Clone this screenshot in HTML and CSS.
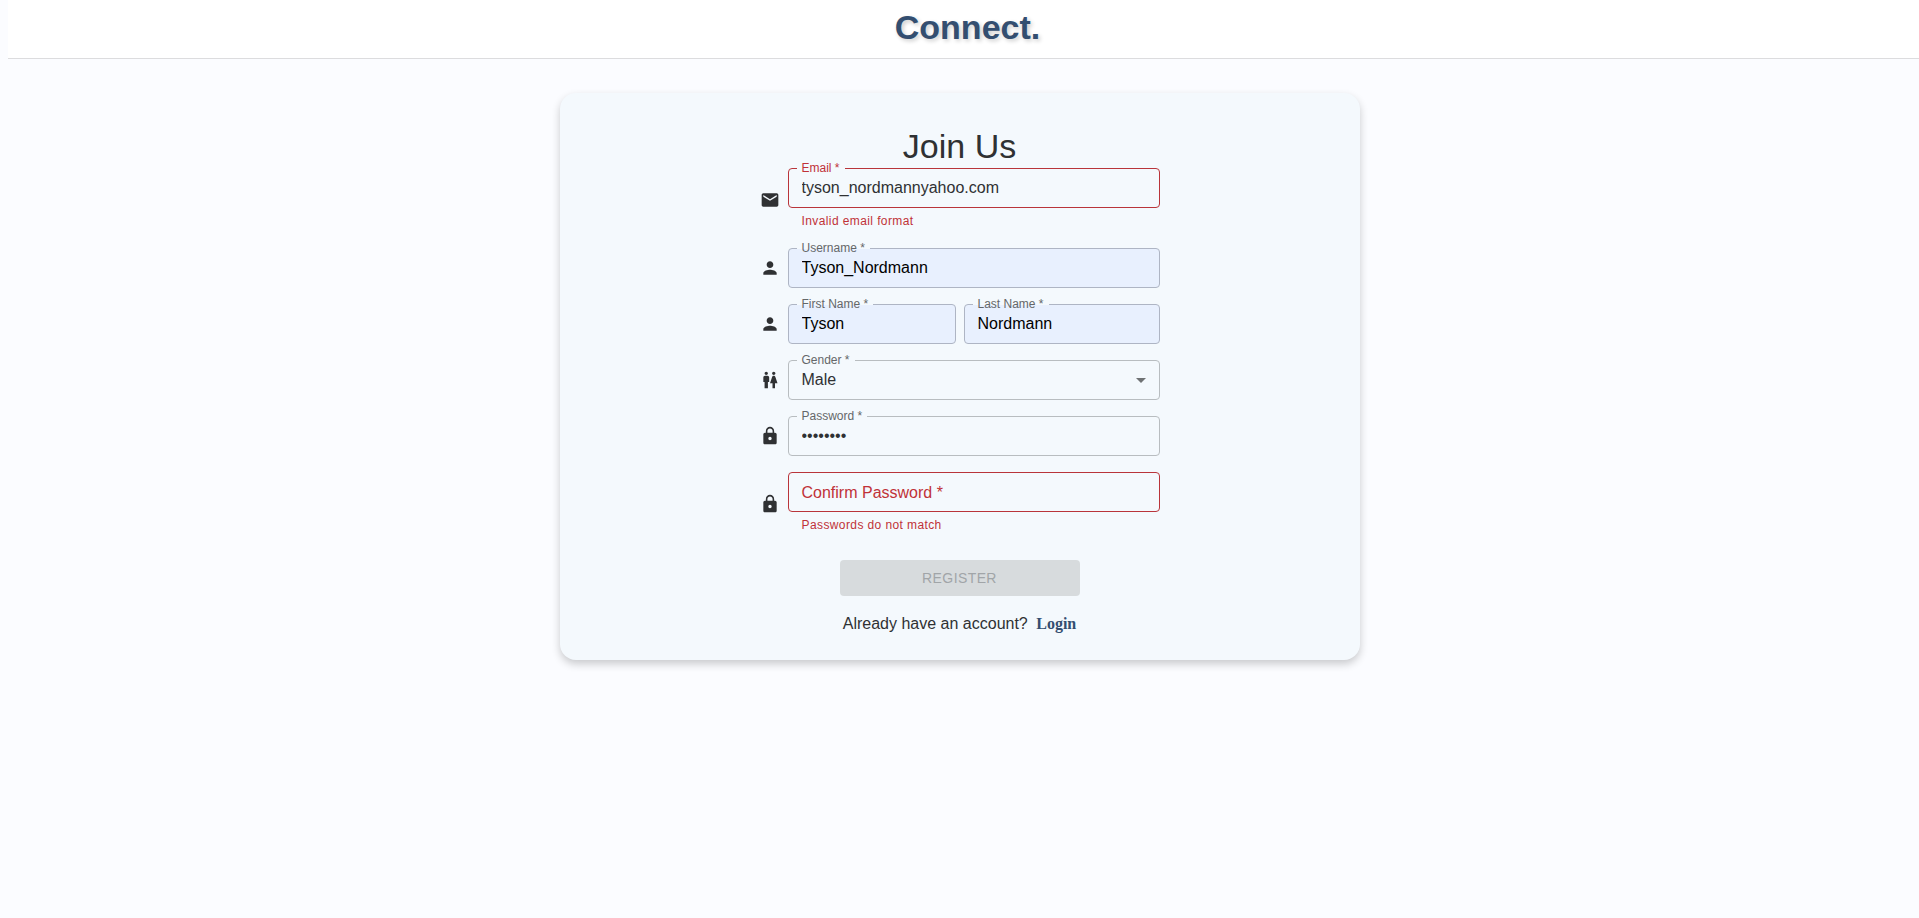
FILE: index.html
```html
<!DOCTYPE html>
<html lang="en">
<head>
<meta charset="utf-8">
<meta name="viewport" content="width=device-width, initial-scale=1">
<title>Connect. - Join Us</title>
<link rel="stylesheet" href="styles.css">
</head>
<body>
<header class="topbar"><span class="brand">Connect.</span></header>
<main class="page">
  <form class="card" novalidate>
    <h1 class="title">Join Us</h1>
    <div class="rows">
      <div class="row">
        <svg class="icon" viewBox="0 0 24 24" aria-hidden="true"><path d="M20 4H4c-1.100 0-1.990.9-1.990 2L2 18c0 1.100.9 2 2 2h16c1.100 0 2-.9 2-2V6c0-1.100-.9-2-2-2zm0 4l-8 5-8-5V6l8 5 8-5v2z"/></svg>
        <div class="field error">
          <label class="label" for="email">Email *</label>
          <input class="control" id="email" type="email" value="tyson_nordmannyahoo.com" aria-describedby="email-help">
          <p class="help" id="email-help">Invalid email format</p>
        </div>
      </div>
      <div class="row">
        <svg class="icon" viewBox="0 0 24 24" aria-hidden="true"><path d="M12 12c2.210 0 4-1.790 4-4s-1.790-4-4-4-4 1.790-4 4 1.790 4 4 4zm0 2c-2.670 0-8 1.340-8 4v2h16v-2c0-2.660-5.330-4-8-4z"/></svg>
        <div class="field filled">
          <label class="label" for="username">Username *</label>
          <input class="control" id="username" type="text" value="Tyson_Nordmann">
        </div>
      </div>
      <div class="row">
        <svg class="icon" viewBox="0 0 24 24" aria-hidden="true"><path d="M12 12c2.210 0 4-1.790 4-4s-1.790-4-4-4-4 1.790-4 4 1.790 4 4 4zm0 2c-2.670 0-8 1.340-8 4v2h16v-2c0-2.660-5.330-4-8-4z"/></svg>
        <div class="field filled first">
          <label class="label" for="first">First Name *</label>
          <input class="control" id="first" type="text" value="Tyson">
        </div>
        <div class="field filled last">
          <label class="label" for="last">Last Name *</label>
          <input class="control" id="last" type="text" value="Nordmann">
        </div>
      </div>
      <div class="row">
        <svg class="icon" viewBox="0 0 24 24" aria-hidden="true"><path d="M5.500 22v-7.500H4V9c0-1.100.9-2 2-2h3c1.100 0 2 .9 2 2v5.500H9.500V22h-4zM18 22v-6h3l-2.540-7.630C18.180 7.550 17.420 7 16.560 7h-.12c-.86 0-1.630.55-1.900 1.370L12 16h3v6h3zM7.500 6c1.110 0 2-.89 2-2s-.89-2-2-2-2 .89-2 2 .89 2 2 2zm9 0c1.110 0 2-.89 2-2s-.89-2-2-2-2 .89-2 2 .89 2 2 2z"/></svg>
        <div class="field">
          <label class="label" for="gender">Gender *</label>
          <select class="control" id="gender"><option selected>Male</option><option>Female</option></select>
          <svg class="arrow" viewBox="0 0 24 24" aria-hidden="true"><path d="M7 10l5 5 5-5z"/></svg>
        </div>
      </div>
      <div class="row">
        <svg class="icon" viewBox="0 0 24 24" aria-hidden="true"><path d="M18 8h-1V6c0-2.760-2.240-5-5-5S7 3.240 7 6v2H6c-1.100 0-2 .9-2 2v10c0 1.100.9 2 2 2h12c1.100 0 2-.9 2-2V10c0-1.100-.9-2-2-2zm-6 9c-1.100 0-2-.9-2-2s.9-2 2-2 2 .9 2 2-.9 2-2 2zm3.100-9H8.900V6c0-1.710 1.390-3.100 3.100-3.100 1.710 0 3.100 1.390 3.100 3.100v2z"/></svg>
        <div class="field">
          <label class="label" for="password">Password *</label>
          <input class="control" id="password" type="password" value="password">
        </div>
      </div>
      <div class="row">
        <svg class="icon" viewBox="0 0 24 24" aria-hidden="true"><path d="M18 8h-1V6c0-2.760-2.240-5-5-5S7 3.240 7 6v2H6c-1.100 0-2 .9-2 2v10c0 1.100.9 2 2 2h12c1.100 0 2-.9 2-2V10c0-1.100-.9-2-2-2zm-6 9c-1.100 0-2-.9-2-2s.9-2 2-2 2 .9 2 2-.9 2-2 2zm3.100-9H8.900V6c0-1.710 1.390-3.100 3.100-3.100 1.710 0 3.100 1.390 3.100 3.100v2z"/></svg>
        <div class="field error">
          <label class="label resting" for="confirm">Confirm Password *</label>
          <input class="control" id="confirm" type="password" aria-describedby="confirm-help">
          <p class="help" id="confirm-help">Passwords do not match</p>
        </div>
      </div>
    </div>
    <button class="register" type="submit" disabled>REGISTER</button>
    <p class="account">Already have an account? <a class="login" href="#login">Login</a></p>
  </form>
</main>
</body>
</html>
```

FILE: styles.css
```css
* {
  box-sizing: border-box;
}

body {
  margin: 0;
  background: #fbfcff;
  color: #2f3133;
  font-family: "Liberation Sans", Arial, sans-serif;
  font-size: 16px;
  line-height: 24px;
}

.topbar {
  display: flex;
  justify-content: center;
  margin-left: 8px;
  padding: 7px 0 11px 8px;
  background: #fff;
  border-bottom: 1px solid #dcdcde;
}

.brand {
  color: #334e70;
  font-size: 34px;
  font-weight: 700;
  line-height: 40px;
  text-shadow: 2px 2px 4px rgba(0, 0, 0, 0.2);
}

.page {
  display: flex;
  justify-content: center;
  padding: 34px 16px;
}

.card {
  display: flex;
  flex-direction: column;
  align-items: center;
  width: 100%;
  max-width: 800px;
  padding: 32px 16px 24px;
  background: #f4f9fd;
  border-radius: 16px;
  box-shadow: 0 4px 8px rgba(0, 0, 0, 0.2);
}

.title {
  margin: 0;
  font-size: 34px;
  font-weight: 400;
  line-height: 43px;
}

.rows {
  display: flex;
  flex-direction: column;
  gap: 16px;
  width: 100%;
  max-width: 400px;
}

.row {
  display: flex;
  align-items: center;
  gap: 8px;
}

.icon {
  flex: none;
  width: 20px;
  height: 20px;
  fill: #2f3133;
}

.field {
  position: relative;
  flex: 1;
  min-width: 0;
}

.first {
  flex: 6;
}

.last {
  flex: 7;
}

.control {
  display: block;
  width: 100%;
  height: 40px;
  margin: 0;
  padding: 0 13px;
  appearance: none;
  background: transparent;
  border: 1px solid #b8bdc0;
  border-radius: 4px;
  color: inherit;
  font: inherit;
}

.filled .control {
  background: #e8f0fe;
  border-color: #aeb5c4;
  color: #000;
}

.error .control {
  border-color: #b9353b;
}

.label {
  position: absolute;
  top: -8px;
  left: 9px;
  padding: 0 5px;
  background: linear-gradient(#f4f9fd, #f4f9fd) no-repeat 0 8px / 100% 1px;
  color: #646769;
  font-size: 12px;
  line-height: 16px;
  pointer-events: none;
}

.resting {
  top: 9px;
  background: none;
  font-size: 16px;
  line-height: 24px;
}

.error .label,
.help {
  color: #c03238;
}

.help {
  margin: 3px 14px 1px;
  font-size: 12px;
  line-height: 20px;
  letter-spacing: 0.03333em;
}

.arrow {
  position: absolute;
  top: 8px;
  right: 7px;
  width: 24px;
  height: 24px;
  fill: #6f7274;
  pointer-events: none;
}

.register {
  width: 100%;
  max-width: 240px;
  height: 36px;
  margin: 24px 0 16px;
  background: #d7dbdd;
  border: 0;
  border-radius: 4px;
  color: #a1a5a8;
  font: inherit;
  font-size: 14px;
  letter-spacing: 0.02857em;
}

.account {
  margin: 0;
}

.login {
  margin-left: 4px;
  color: #334e70;
  font-family: "Liberation Serif", "Times New Roman", serif;
  font-weight: 700;
  text-decoration: none;
}
```
